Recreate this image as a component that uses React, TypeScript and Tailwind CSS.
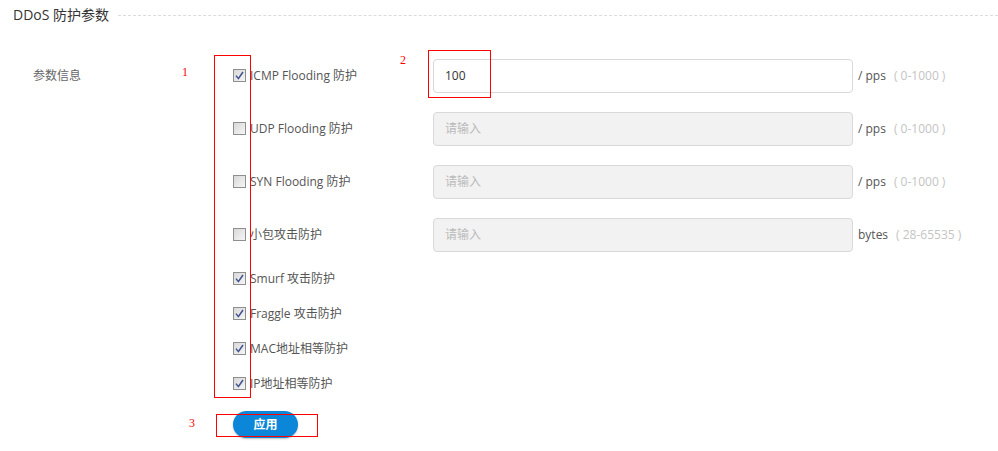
const font = "font-['Open_Sans','Noto_Sans_CJK_SC',sans-serif]";

type Item = {
  label: string;
  checked: boolean;
  value?: string;
  unit?: string;
  range?: string;
};

const inputRows: Item[] = [
  { label: "ICMP Flooding 防护", checked: true, value: "100", unit: "/ pps", range: "( 0-1000 )" },
  { label: "UDP Flooding 防护", checked: false, unit: "/ pps", range: "( 0-1000 )" },
  { label: "SYN Flooding 防护", checked: false, unit: "/ pps", range: "( 0-1000 )" },
  { label: "小包攻击防护", checked: false, unit: "bytes", range: "( 28-65535 )" },
];

const plainRows: Item[] = [
  { label: "Smurf 攻击防护", checked: true },
  { label: "Fraggle 攻击防护", checked: true },
  { label: "MAC地址相等防护", checked: true },
  { label: "IP地址相等防护", checked: true },
];

function Check({ checked }: { checked: boolean }) {
  return (
    <span className="flex h-[13px] w-[13px] shrink-0 items-center justify-center border border-[#8e8f8f] bg-gradient-to-br from-[#d8d8d8] to-[#f6f6f6]">
      {checked ? (
        <svg width="9" height="9" viewBox="0 0 9 9">
          <path d="M1 4.6 L3.4 7.6 L8 1" fill="none" stroke="#3d4f8f" strokeWidth="1.5" />
        </svg>
      ) : null}
    </span>
  );
}

function Row({ item }: { item: Item }) {
  return (
    <div className="flex h-[53px] items-center">
      <Check checked={item.checked} />
      <span className="ml-[4px] w-[183px] text-[12px] text-[#555]">{item.label}</span>
      <div
        className={`flex h-[34px] w-[420px] items-center rounded-[4px] border border-[#d9d9d9] px-[11px] text-[12px] ${
          item.value ? "bg-white text-[#333]" : "bg-[#f2f2f2] text-[#bbb]"
        }`}
      >
        {item.value ?? "请输入"}
      </div>
      <span className="ml-[5px] text-[12px] text-[#555]">{item.unit}</span>
      <span className="ml-[8px] text-[12px] text-[#c4c4c4]">{item.range}</span>
    </div>
  );
}

export default function App() {
  return (
    <div className={`relative h-[451px] w-[998px] overflow-hidden bg-white ${font}`}>
      <div className="flex h-[28px] items-center pl-[13px]">
        <span className="text-[14px] text-[#333]">DDoS 防护参数</span>
        <div className="ml-[9px] mt-[2px] flex-1 border-t border-dashed border-[#dcdcdc]" />
      </div>

      <div className="mt-[21px] flex">
        <div className="w-[233px] pl-[33px]">
          <div className="flex h-[53px] items-center text-[12px] text-[#666]">参数信息</div>
        </div>
        <div>
          {inputRows.map((item) => (
            <Row key={item.label} item={item} />
          ))}
          {plainRows.map((item) => (
            <div key={item.label} className="flex h-[35px] items-center">
              <Check checked={item.checked} />
              <span className="ml-[4px] text-[12px] text-[#555]">{item.label}</span>
            </div>
          ))}
          <button
            type="button"
            className="mt-[10px] flex h-[27px] w-[65px] items-center justify-center rounded-full bg-[#0b86d8] text-[12px] font-semibold text-white shadow-[0_1px_2px_rgba(0,0,0,0.25)]"
          >
            应用
          </button>
        </div>
      </div>

      {/* red annotations */}
      <span className="absolute left-[182px] top-[63px] font-['Liberation_Serif',serif] text-[12px] text-[#f00]">1</span>
      <div className="absolute left-[214px] top-[55px] h-[343px] w-[37px] border border-[#f00]" />
      <span className="absolute left-[400px] top-[51px] font-['Liberation_Serif',serif] text-[12px] text-[#f00]">2</span>
      <div className="absolute left-[428px] top-[50px] h-[48px] w-[63px] border border-[#f00]" />
      <span className="absolute left-[189px] top-[414px] font-['Liberation_Serif',serif] text-[12px] text-[#f00]">3</span>
      <div className="absolute left-[216px] top-[414px] h-[23px] w-[102px] border border-[#f00]" />
    </div>
  );
}
